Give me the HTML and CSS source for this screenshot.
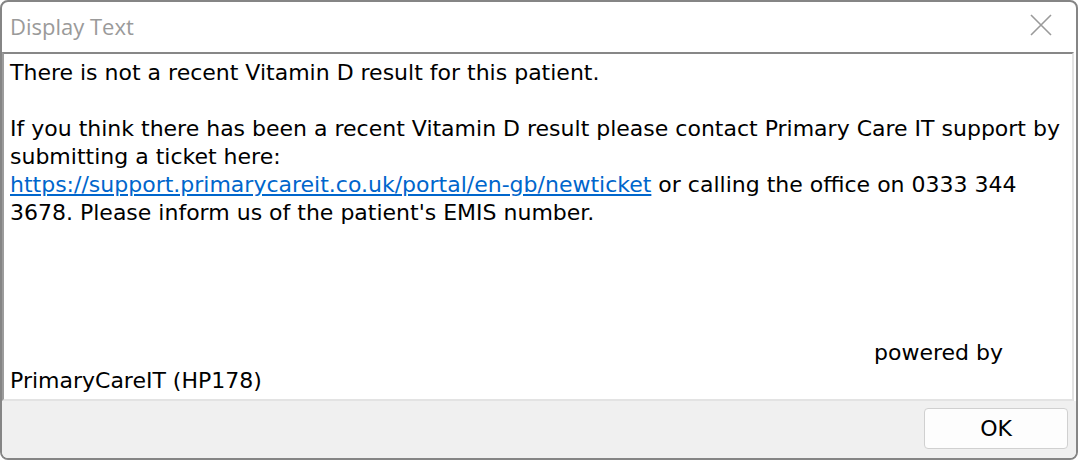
FILE: index.html
```html
<!DOCTYPE html>
<html>
<head>
<meta charset="utf-8">
<link rel="stylesheet" href="styles.css">
</head>
<body>
<div class="window">
  <div class="titlebar">
    <span class="title">Display Text</span>
    <svg class="close" width="22" height="22" viewBox="0 0 22 22"><path d="M1 1 L21 21 M21 1 L1 21" stroke="#9a9a9a" stroke-width="1.6" fill="none"/></svg>
  </div>
  <div class="textbox">
    <p>There is not a recent Vitamin D result for this patient.</p>
    <p class="blank">&nbsp;</p>
    <p>If you think there has been a recent Vitamin D result please contact Primary Care IT support by submitting a ticket here:<br><a href="#">https://support.primarycareit.co.uk/portal/en-gb/newticket</a> or calling the office on 0333 344 3678. Please inform us of the patient's EMIS number.</p>
    <div class="spacer"></div>
    <p class="powered">powered by</p>
    <p class="brand">PrimaryCareIT (HP178)</p>
  </div>
  <div class="footer">
    <button class="ok">OK</button>
  </div>
</div>
</body>
</html>
```
FILE: styles.css
```css
html, body { margin: 0; padding: 0; background: #fff; }
.window {
  box-sizing: border-box;
  width: 1078px;
  height: 460px;
  border: 2px solid #858585;
  border-radius: 8px;
  display: flex;
  flex-direction: column;
  overflow: hidden;
  background: #fff;
}
.titlebar {
  height: 50px;
  display: flex;
  align-items: center;
  justify-content: space-between;
  padding: 0 24px 0 8px;
  flex: none;
}
.title {
  font-family: "Open Sans", "Noto Sans", sans-serif;
  font-size: 22px;
  color: #9a9a9a;
  margin-top: -2px;
}
.close { margin-top: -4px; }
.textbox {
  flex: 1;
  border-top: 2px solid #878787;
  border-left: 2px solid #9c9c9c;
  border-right: 2px solid #e3e3e3;
  border-bottom: 2px solid #e3e3e3;
  margin-right: 2px;
  padding: 5px 8px 0 6px;
  font-family: "DejaVu Sans", sans-serif;
  font-size: 22px;
  line-height: 28px;
  color: #000;
  display: flex;
  flex-direction: column;
}
.textbox p { margin: 0; }
.textbox a { color: #0066cc; text-decoration: underline; }
.spacer { height: 112px; }
.powered { padding-left: 864px; }
.footer {
  height: 57px;
  flex: none;
  background: #f0f0f0;
  display: flex;
  justify-content: flex-end;
  align-items: flex-start;
  padding: 7px 8px 0 0;
  box-sizing: border-box;
}
.ok {
  width: 144px;
  height: 41px;
  background: #fdfdfd;
  border: 1px solid #d0d0d0;
  border-radius: 4px;
  font-family: "DejaVu Sans", sans-serif;
  font-size: 22px;
  color: #000;
}
```
